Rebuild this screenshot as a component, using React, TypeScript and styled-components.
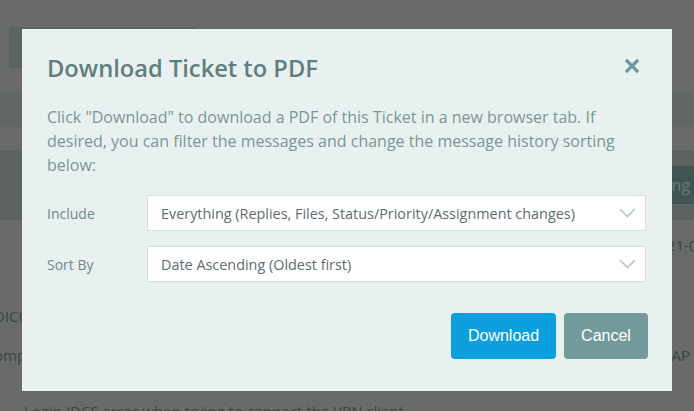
import React, { useState } from 'react'
import styled, { createGlobalStyle } from 'styled-components'

const GlobalStyle = createGlobalStyle`
  html, body {
    margin: 0;
    padding: 0;
    overflow: hidden;
  }
  body {
    font-family: 'Open Sans', 'Liberation Sans', sans-serif;
  }
`

const includeOptions = ['Everything (Replies, Files, Status/Priority/Assignment changes)']
const sortOptions = ['Date Ascending (Oldest first)']

function Chevron() {
  return (
    <svg width="17" height="10" viewBox="0 0 17 10" fill="none">
      <polyline points="1,1 8.5,8.5 16,1" stroke="#b5c5c5" strokeWidth="1.6" />
    </svg>
  )
}

function CloseIcon() {
  return (
    <svg width="14" height="14" viewBox="0 0 14 14">
      <path d="M2 2 L12 12 M12 2 L2 12" stroke="#6b9b9d" strokeWidth="3.2" strokeLinecap="square" />
    </svg>
  )
}

type SelectFieldProps = {
  label: string
  value: string
}

function SelectField({ label, value }: SelectFieldProps) {
  return (
    <FieldRow>
      <FieldLabel>{label}</FieldLabel>
      <SelectBox>
        <SelectValue>{value}</SelectValue>
        <Chevron />
      </SelectBox>
    </FieldRow>
  )
}

export default function App() {
  const [open, setOpen] = useState(true)

  return (
    <>
      <GlobalStyle />
      <Page>
        <HeaderRow>
          <HeaderBlock />
        </HeaderRow>
        <SubBand />
        <Toolbar>
          <ToolbarButton>Filtering</ToolbarButton>
        </Toolbar>
        <MetaLine>2021-03</MetaLine>
        <BodyLine>DICI</BodyLine>
        <BodySplit>
          <span>omp</span>
          <span>AP f</span>
        </BodySplit>
        <FootLine>Login IDCS error when trying to connect the VPN client</FootLine>
      </Page>

      {open && (
        <Backdrop>
          <Modal>
            <ModalHeader>
              <ModalTitle>Download Ticket to PDF</ModalTitle>
              <CloseButton onClick={() => setOpen(false)}>
                <CloseIcon />
              </CloseButton>
            </ModalHeader>
            <Intro>
              Click "Download" to download a PDF of this Ticket in a new browser tab. If desired, you can
              filter the messages and change the message history sorting below:
            </Intro>
            <Fields>
              <SelectField label="Include" value={includeOptions[0]} />
              <SelectField label="Sort By" value={sortOptions[0]} />
            </Fields>
            <Actions>
              <ActionButton variant="primary">Download</ActionButton>
              <ActionButton variant="secondary" onClick={() => setOpen(false)}>
                Cancel
              </ActionButton>
            </Actions>
          </Modal>
        </Backdrop>
      )}
    </>
  )
}

const Page = styled.div`
  width: 694px;
  height: 411px;
  overflow: hidden;
  background-color: #d0d6d2;
  padding-top: 27px;
  box-sizing: border-box;
  color: #788c88;
  font-size: 15px;
  line-height: 20px;
`

const HeaderRow = styled.div`
  height: 41px;
  padding-left: 9px;
  display: flex;
`

const HeaderBlock = styled.div`
  width: 189px;
  background-color: #b6c8c2;
`

const SubBand = styled.div`
  margin-top: 24px;
  height: 35px;
  background-color: #c4cecb;
`

const Toolbar = styled.div`
  margin-top: 23px;
  height: 70px;
  background-color: #b8c6c2;
  display: flex;
  justify-content: flex-end;
  align-items: center;
`

const ToolbarButton = styled.div`
  height: 38px;
  width: 88px;
  flex-shrink: 0;
  margin-right: -24px;
  background-color: #7ea8a6;
  color: #d6f0ec;
  font-size: 16px;
  display: flex;
  align-items: center;
  padding-left: 10px;
`

const MetaLine = styled.div`
  margin-top: 15px;
  margin-right: -12px;
  text-align: right;
  white-space: nowrap;
`

const BodyLine = styled.div`
  margin-top: 51px;
  margin-left: -6px;
  white-space: nowrap;
`

const BodySplit = styled.div`
  margin-top: 19px;
  margin-left: -6px;
  margin-right: -5px;
  display: flex;
  justify-content: space-between;
  white-space: nowrap;
`

const FootLine = styled.div`
  margin-top: 36px;
  margin-left: 24px;
  white-space: nowrap;
`

const Backdrop = styled.div`
  position: fixed;
  inset: 0;
  background-color: rgba(0, 0, 0, 0.5);
  display: flex;
  justify-content: center;
  align-items: flex-start;
`

const Modal = styled.div`
  margin-top: 29px;
  width: 650px;
  height: 362px;
  box-sizing: border-box;
  background-color: #e8f1f0;
  padding: 23px 26px 32px 25px;
  display: flex;
  flex-direction: column;
`

const ModalHeader = styled.div`
  display: flex;
  justify-content: space-between;
  align-items: center;
`

const ModalTitle = styled.h2`
  margin: 0;
  font-size: 23.7px;
  line-height: 32px;
  font-weight: 600;
  color: #5f7e7f;
`

const CloseButton = styled.button`
  background: transparent;
  border: none;
  padding: 0;
  margin-right: 7px;
  margin-top: -4px;
  display: flex;
  cursor: pointer;
`

const Intro = styled.p`
  margin: 21px 0 0;
  font-size: 16px;
  line-height: 24px;
  color: #7d9595;
`

const Fields = styled.div`
  margin-top: 18px;
  display: flex;
  flex-direction: column;
  gap: 15px;
`

const FieldRow = styled.div`
  display: flex;
  align-items: center;
`

const FieldLabel = styled.div`
  width: 100px;
  font-size: 14px;
  color: #6f8888;
`

const SelectBox = styled.div`
  flex: 1;
  height: 36px;
  box-sizing: border-box;
  background-color: #ffffff;
  border: 1px solid #d6e2e1;
  display: flex;
  align-items: center;
  justify-content: space-between;
  padding: 0 9px 0 13px;
`

const SelectValue = styled.span`
  font-size: 14.4px;
  color: #5d6d6d;
`

const Actions = styled.div`
  margin-top: auto;
  display: flex;
  justify-content: flex-end;
  gap: 8px;
  margin-right: -2px;
`

const ActionButton = styled.button<{ variant: 'primary' | 'secondary' }>`
  height: 46px;
  border: none;
  border-radius: 4px;
  padding: 0 16px;
  min-width: ${(p) => (p.variant === 'primary' ? '105px' : '84px')};
  font-family: 'Liberation Sans', Arial, sans-serif;
  font-size: 16px;
  color: #ffffff;
  background-color: ${(p) => (p.variant === 'primary' ? '#0b9fde' : '#739a9b')};
  cursor: pointer;
`
